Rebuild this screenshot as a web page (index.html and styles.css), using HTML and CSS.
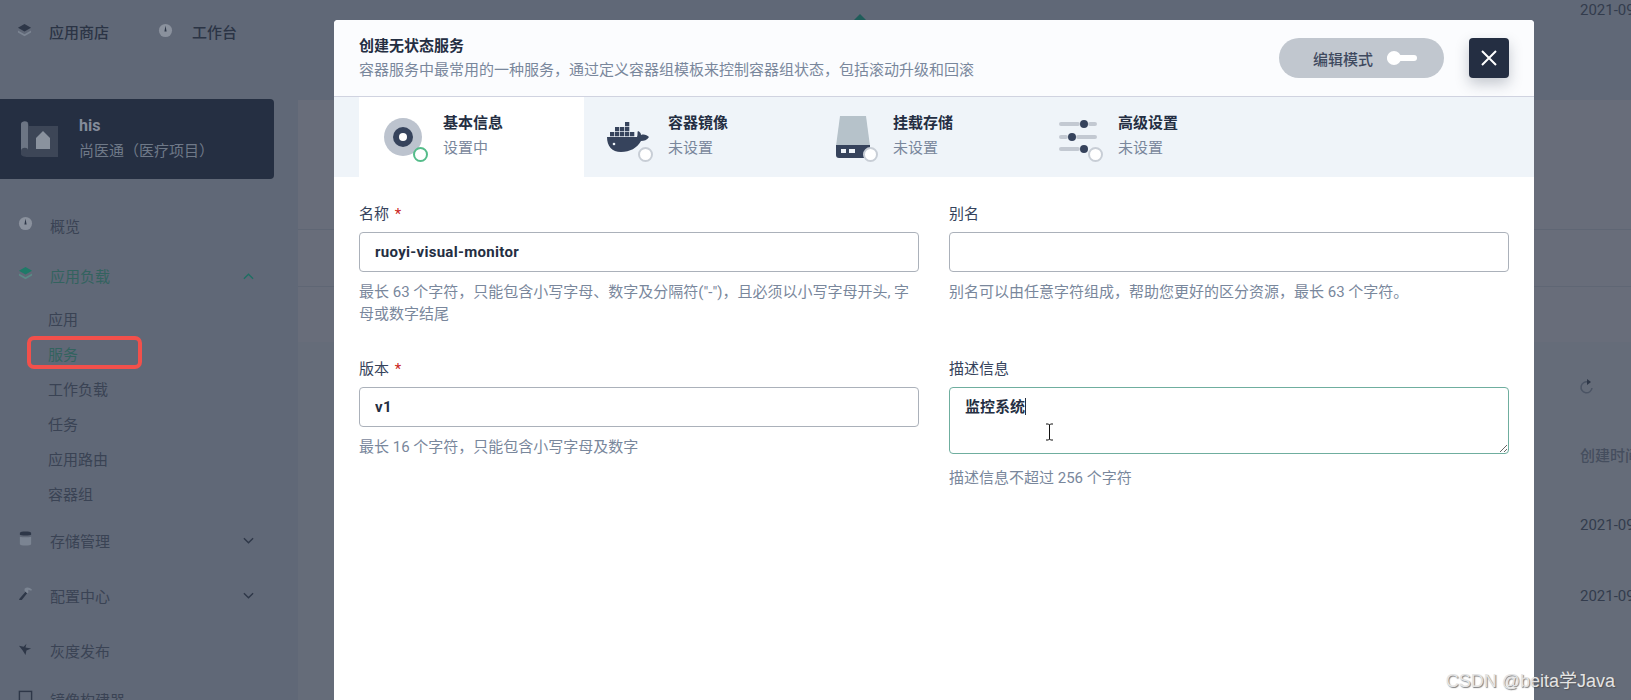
FILE: index.html
```html
<!DOCTYPE html>
<html lang="en">

<head>
  <meta charset="UTF-8">
  <meta name="viewport" content="width=device-width, initial-scale=1.0">
  <title>创建无状态服务</title>
  <link rel="stylesheet" href="styles.css">
</head>

<body>
  <!-- 后面的页面 (被遮罩盖住) -->
  <div class="behind">
    <div class="behind_panel top"><i></i><i></i></div>
    <div class="behind_panel bottom"></div>
    <svg class="behind_logo" viewBox="0 0 24 12"><path d="M12 0l12 12H0z" fill="#1f5d5a"/></svg>
    <svg class="behind_refresh" viewBox="0 0 16 16"><path d="M13 9a5.500 5.500 0 1 1-4-6" fill="none" stroke="#4b5464" stroke-width="1.500"/><path d="M8 0l4 3-4 3z" fill="#2e3748"/></svg>
    <div class="behind_head">创建时间</div>
    <div class="behind_cell">2021-09</div>
    <div class="behind_cell">2021-09</div>
    <div class="behind_cell">2021-09</div>
  </div>

  <div class="page">
    <div class="topnav">
      <a class="topnav_item">
        <svg class="topnav_icon" viewBox="0 0 16 16"><path d="M8 1l7 4-7 4-7-4z" fill="#2e3748"/><path d="M1 8l7 4 7-4v2l-7 4-7-4z" fill="#7b8492"/></svg>
        应用商店
      </a>
      <a class="topnav_item">
        <svg class="topnav_icon" viewBox="0 0 16 16"><circle cx="8" cy="8" r="7" fill="#8a919d"/><path d="M8 3l1.2 6H6.800z" fill="#2e3748"/></svg>
        工作台
      </a>
    </div>

    <div class="project">
      <svg class="project_icon" viewBox="0 0 38 38">
        <path d="M8 2c-4 0-7 0-7 3v29c0 2 3 3 7 3h30V6H9z" fill="#3d4657"/>
        <path d="M1 4c0-3 7-4 7 0v26c0-3-7-3-7 1z" fill="#6c7584"/>
        <path d="M16 18l7-7 7 7v11H16z" fill="#8a929e"/>
      </svg>
      <div>
        <div class="project_name">his</div>
        <div class="project_desc">尚医通（医疗项目）</div>
      </div>
    </div>

    <ul class="menu">
      <li class="menu_item overview">
        <svg class="menu_icon" viewBox="0 0 16 16"><circle cx="8" cy="8" r="7" fill="#8a919d"/><path d="M8 3l1.200 6H6.800z" fill="#2e3748"/></svg>
        概览
      </li>
      <li class="menu_item open">
        <svg class="menu_icon" viewBox="0 0 16 16"><path d="M8 1l7 4-7 4-7-4z" fill="#1f7a68"/><path d="M1 8l7 4 7-4v2l-7 4-7-4z" fill="#5a8a86"/></svg>
        应用负载
        <svg class="menu_arrow" viewBox="0 0 12 8"><path d="M1 7l5-5 5 5" fill="none" stroke="#1f6f63" stroke-width="1.500"/></svg>
      </li>
      <li class="sub_item first">应用</li>
      <li class="sub_item current">服务</li>
      <li class="sub_item">工作负载</li>
      <li class="sub_item">任务</li>
      <li class="sub_item">应用路由</li>
      <li class="sub_item">容器组</li>
      <li class="menu_item storage">
        <svg class="menu_icon" viewBox="0 0 16 16"><path d="M2 2c0-2 12-2 12 0v2c0 1-12 1-12 0z" fill="#2e3748"/><path d="M2 6c3 1 9 1 12 0v8c0 2-12 2-12 0z" fill="#7b8492"/></svg>
        存储管理
        <svg class="menu_arrow" viewBox="0 0 12 8"><path d="M1 1l5 5 5-5" fill="none" stroke="#2e3748" stroke-width="1.500"/></svg>
      </li>
      <li class="menu_item">
        <svg class="menu_icon" viewBox="0 0 16 16"><path d="M1 15l1-2 6-7 2 1.500-6 7.500z" fill="#2e3748"/><path d="M7 3c2-2 5-2 8 1l-1 1-3-1 0 3-1 1-3-3z" fill="#7b8492"/></svg>
        配置中心
        <svg class="menu_arrow" viewBox="0 0 12 8"><path d="M1 1l5 5 5-5" fill="none" stroke="#2e3748" stroke-width="1.500"/></svg>
      </li>
      <li class="menu_item gray">
        <svg class="menu_icon" viewBox="0 0 16 16"><path d="M1 5l5 1 3-3-1 4 6 1-5 2-1 5-3-5z" fill="#2e3748"/></svg>
        灰度发布
      </li>
      <li class="menu_item">
        <svg class="menu_icon" viewBox="0 0 16 16"><rect x="1.500" y="1.500" width="13" height="13" fill="none" stroke="#2e3748" stroke-width="1.500"/></svg>
        镜像构建器
      </li>
    </ul>
  </div>

  <!-- 弹窗 -->
  <div class="modal">
    <div class="modal_head">
      <div class="modal_title">
        <h1>创建无状态服务</h1>
        <p>容器服务中最常用的一种服务，通过定义容器组模板来控制容器组状态，包括滚动升级和回滚</p>
      </div>
      <div class="edit_btn">
        编辑模式
        <span class="edit_toggle"></span>
      </div>
      <div class="close_btn">
        <svg viewBox="0 0 18 18" width="18" height="18"><path d="M2 2l14 14M16 2L2 16" stroke="#fff" stroke-width="2"/></svg>
      </div>
    </div>

    <ul class="tabs">
      <li class="tab active">
        <div class="tab_icon">
          <svg viewBox="0 0 44 42"><circle cx="21" cy="21" r="19" fill="#bcc3ce"/><circle cx="21" cy="21" r="10" fill="#36435c"/><circle cx="21" cy="21" r="4" fill="#fff"/></svg>
          <span class="tab_dot"></span>
        </div>
        <div><h3>基本信息</h3><p>设置中</p></div>
      </li>
      <li class="tab">
        <div class="tab_icon">
          <svg viewBox="0 0 44 42">
            <path d="M0 21H30C31 19 30 16 31 15C33 16 34 17 34 19C37 18 40 19 42 21C40 24 37 25 34 25C30 32 23 36 14 36C5 36 0 30 0 21z" fill="#36435c"/>
            <circle cx="7" cy="28" r="1.300" fill="#eff4f9"/>
            <g fill="#36435c">
              <rect x="3" y="16" width="4.300" height="4.300"/><rect x="8" y="16" width="4.300" height="4.300"/><rect x="13" y="16" width="4.300" height="4.300"/><rect x="18" y="16" width="4.300" height="4.300"/><rect x="23" y="16" width="4.300" height="4.300"/>
              <rect x="8" y="11" width="4.300" height="4.300"/><rect x="13" y="11" width="4.300" height="4.300"/><rect x="18" y="11" width="4.300" height="4.300"/>
              <rect x="18" y="6" width="4.300" height="4.300"/>
            </g>
          </svg>
          <span class="tab_dot"></span>
        </div>
        <div><h3>容器镜像</h3><p>未设置</p></div>
      </li>
      <li class="tab">
        <div class="tab_icon">
          <svg viewBox="0 0 44 42">
            <path d="M8 0h26l4 30H4z" fill="#b6c2ca"/>
            <path d="M4 29h34v10a3 3 0 0 1-3 3H7a3 3 0 0 1-3-3z" fill="#36435c"/>
            <rect x="9" y="33" width="5" height="4" fill="#eff4f9"/><rect x="17" y="33" width="6" height="4" fill="#eff4f9"/>
          </svg>
          <span class="tab_dot"></span>
        </div>
        <div><h3>挂载存储</h3><p>未设置</p></div>
      </li>
      <li class="tab">
        <div class="tab_icon">
          <svg viewBox="0 0 44 42">
            <path d="M4 8h17M33 8h5M4 21h5M21 21h17M4 33h17" stroke="#c3c9d2" stroke-width="4" stroke-linecap="round"/>
            <circle cx="27" cy="8" r="4" fill="#36435c"/>
            <circle cx="15" cy="21" r="4" fill="#36435c"/>
            <circle cx="27" cy="33" r="4" fill="#36435c"/>
          </svg>
          <span class="tab_dot"></span>
        </div>
        <div><h3>高级设置</h3><p>未设置</p></div>
      </li>
    </ul>

    <form class="form">
      <div class="field">
        <label>名称 <em>*</em></label>
        <input class="input" type="text" value="ruoyi-visual-monitor">
        <p class="hint">最长 63 个字符，只能包含小写字母、数字及分隔符("-")，且必须以小写字母开头, 字母或数字结尾</p>
      </div>
      <div class="field">
        <label>别名</label>
        <input class="input" type="text">
        <p class="hint">别名可以由任意字符组成，帮助您更好的区分资源，最长 63 个字符。</p>
      </div>
      <div class="field">
        <label>版本 <em>*</em></label>
        <input class="input" type="text" value="v1">
        <p class="hint">最长 16 个字符，只能包含小写字母及数字</p>
      </div>
      <div class="field">
        <label>描述信息</label>
        <div class="area_wrap">
          <textarea class="input area">监控系统</textarea>
          <span class="caret"></span>
          <svg class="ibeam" viewBox="0 0 9 18" width="9" height="18"><path d="M1 1h2.500l1 1 1-1H8M4.500 2v14M1 17h2.500l1-1 1 1H8" fill="none" stroke="#111" stroke-width="1"/></svg>
        </div>
        <p class="hint area_hint">描述信息不超过 256 个字符</p>
      </div>
    </form>
  </div>

  <div class="watermark">CSDN @beita学Java</div>
</body>

</html>
```

FILE: styles.css
```css
html, body {
  margin: 0;
  padding: 0;
  height: 700px;
  overflow: hidden;
}

body {
  position: relative;
  font-family: Roboto, "Noto Sans CJK SC", sans-serif;
  font-size: 15px;
  color: #242e42;
  background: #606877;
}

ul {
  margin: 0;
  padding: 0;
  list-style: none;
}

/* 后面的页面 */
.page {
  position: relative;
  height: 700px;
  width: 334px;
  color: #2e3748;
}

.topnav {
  display: flex;
  gap: 49px;
  padding: 23px 0 0 17px;
  height: 99px;
  box-sizing: border-box;
  font-weight: 500;
  color: #2b3445;
}

.topnav_item {
  display: flex;
  align-items: flex-start;
  gap: 17px;
  line-height: 20px;
}

.topnav_item + .topnav_item {
  gap: 19px;
}

.topnav_icon {
  width: 15px;
  height: 15px;
}

.project {
  display: flex;
  gap: 21px;
  align-items: center;
  width: 274px;
  height: 80px;
  padding-left: 20px;
  box-sizing: border-box;
  background: #252f42;
  border-radius: 0 4px 4px 0;
  color: #6f7988;
}

.project_icon {
  width: 38px;
  height: 38px;
}

.project_name {
  font-size: 16px;
  font-weight: 700;
  line-height: 22px;
  color: #848c9a;
}

.project_desc {
  margin-top: 2px;
  line-height: 24px;
}

.menu {
  width: 274px;
  padding-top: 35px;
  color: #3a4354;
}

.menu_item {
  position: relative;
  display: flex;
  align-items: center;
  gap: 17px;
  height: 22px;
  padding-left: 18px;
  margin-bottom: 33px;
}

.menu_item.overview {
  margin-bottom: 28px;
}

.menu_item.open {
  color: #33635f;
  margin-bottom: 0;
}

.menu_item.storage {
  margin-top: 23px;
}

.menu_item.gray {
  margin-bottom: 27px;
}

.menu_icon {
  flex: none;
  width: 15px;
  height: 15px;
  margin-top: -3px;
}

.menu_arrow {
  position: absolute;
  left: 243px;
  top: 8px;
  width: 11px;
  height: 8px;
}

.sub_item {
  height: 22px;
  line-height: 22px;
  padding-left: 48px;
  margin-bottom: 13px;
}

.sub_item.first {
  margin-top: 23px;
}

.sub_item.current {
  position: relative;
  color: #33635f;
}

/* 红框 */
.sub_item.current::after {
  content: "";
  position: absolute;
  left: 27px;
  top: -8px;
  width: 107px;
  height: 25px;
  border: 4px solid #f2504b;
  border-radius: 7px;
}

.behind_panel {
  position: absolute;
  left: 298px;
  right: 0;
}

.behind_panel.top {
  top: 100px;
  height: 242px;
  background: #686d7a;
}

.behind_panel.top i {
  display: block;
  height: 1px;
  margin-top: 56px;
  background: #5f6674;
}

.behind_panel.top i:first-child {
  margin-top: 129px;
}

.behind_panel.bottom {
  top: 342px;
  bottom: 0;
  background: #656c79;
}

.behind_logo {
  position: absolute;
  left: 848px;
  top: 14px;
  width: 24px;
  height: 12px;
}

.behind_refresh {
  position: absolute;
  left: 1579px;
  top: 379px;
  width: 16px;
  height: 16px;
}

.behind_head,
.behind_cell {
  position: absolute;
  left: 1580px;
  line-height: 20px;
  white-space: nowrap;
  color: #333c4d;
}

.behind_head {
  top: 446px;
  font-weight: 500;
  color: #454e5e;
}

.behind_cell:nth-of-type(5) { top: 515px; }
.behind_cell:nth-of-type(6) { top: 586px; }
.behind_cell:nth-of-type(7) { top: 657px; }

/* 弹窗 */
.modal {
  position: absolute;
  left: 334px;
  top: 20px;
  width: 1200px;
  height: 680px;
  background: #fff;
  border-radius: 4px 4px 0 0;
}

.modal_head {
  display: flex;
  align-items: center;
  height: 77px;
  padding: 0 25px;
  box-sizing: border-box;
  background: #fbfcfe;
  border-radius: 4px 4px 0 0;
  border-bottom: 1px solid #d0d3e0;
}

.modal_title {
  flex: 1;
}

.modal_title h1 {
  margin: 0;
  font-size: 15px;
  font-weight: 700;
  line-height: 24px;
}

.modal_title p {
  margin: 0;
  line-height: 24px;
  color: #79879c;
}

.edit_btn {
  display: flex;
  align-items: center;
  gap: 11px;
  width: 165px;
  height: 40px;
  padding-left: 34px;
  box-sizing: border-box;
  border-radius: 20px;
  background: #c1c7cf;
  font-weight: 500;
  color: #3f4a5f;
}

.edit_toggle {
  position: relative;
  width: 30px;
  height: 6px;
  margin-left: 3px;
  border-radius: 3px;
  background: #fff;
}

.edit_toggle::before {
  content: "";
  position: absolute;
  left: 0;
  top: -4px;
  width: 14px;
  height: 14px;
  border-radius: 50%;
  background: #fff;
}

.close_btn {
  display: flex;
  align-items: center;
  justify-content: center;
  width: 40px;
  height: 40px;
  margin-left: 25px;
  border-radius: 4px;
  background: #242e42;
  box-shadow: 0 6px 14px rgba(36, 46, 66, 0.25);
}

/* 步骤 */
.tabs {
  display: flex;
  height: 80px;
  padding-left: 25px;
  background: #eff4f9;
}

.tab {
  display: flex;
  gap: 17px;
  width: 225px;
  padding: 14px 0 0 23px;
  box-sizing: border-box;
}

.tab.active {
  background: #fff;
}

.tab_icon {
  position: relative;
  width: 44px;
  height: 42px;
  margin-top: 5px;
  flex: none;
}

.tab_icon svg {
  display: block;
  width: 44px;
  height: 42px;
}

.tab_dot {
  position: absolute;
  left: 31px;
  top: 31px;
  width: 11px;
  height: 11px;
  border: 2px solid #c8ced6;
  border-radius: 50%;
  background: #fff;
}

.tab.active .tab_dot {
  border-color: #55bc8a;
}

.tab h3 {
  margin: 0;
  font-size: 15px;
  font-weight: 700;
  line-height: 24px;
}

.tab p {
  margin: 1px 0 0;
  line-height: 24px;
  color: #79879c;
}

/* 表单 */
.form {
  display: grid;
  grid-template-columns: 560px 560px;
  column-gap: 30px;
  padding: 27px 25px 0;
}

.field {
  height: 155px;
}

label {
  display: block;
  height: 22px;
  line-height: 20px;
  margin-bottom: 6px;
  color: #36435c;
}

label em {
  font-style: normal;
  color: #ca2621;
  margin-left: 2px;
}

.input {
  display: block;
  width: 100%;
  height: 40px;
  padding: 0 15px;
  box-sizing: border-box;
  border: 1px solid #abb1ba;
  border-radius: 4px;
  outline: none;
  background: #fff;
  font-family: Roboto, "Noto Sans CJK SC", sans-serif;
  font-size: 15px;
  font-weight: 700;
  letter-spacing: 0.3px;
  color: #242e42;
}

.area_wrap {
  position: relative;
}

.area {
  height: 67px;
  padding: 9px 15px;
  line-height: 20px;
  letter-spacing: 0;
  border-color: #6fae9f;
  resize: both;
}

.caret {
  position: absolute;
  left: 76px;
  top: 11px;
  width: 1px;
  height: 17px;
  background: #242e42;
}

.ibeam {
  position: absolute;
  left: 96px;
  top: 36px;
}

.hint {
  margin: 9px 0 0;
  line-height: 22px;
  color: #79879c;
}

.area_hint {
  margin-top: 13px;
}

.watermark {
  position: absolute;
  right: 16px;
  bottom: 8px;
  font-family: "Liberation Sans", "Noto Sans CJK SC", sans-serif;
  font-size: 18px;
  color: #e4e4e4;
  text-shadow: 1px 1px 1px rgba(70, 70, 70, 0.7);
  white-space: nowrap;
}
```
